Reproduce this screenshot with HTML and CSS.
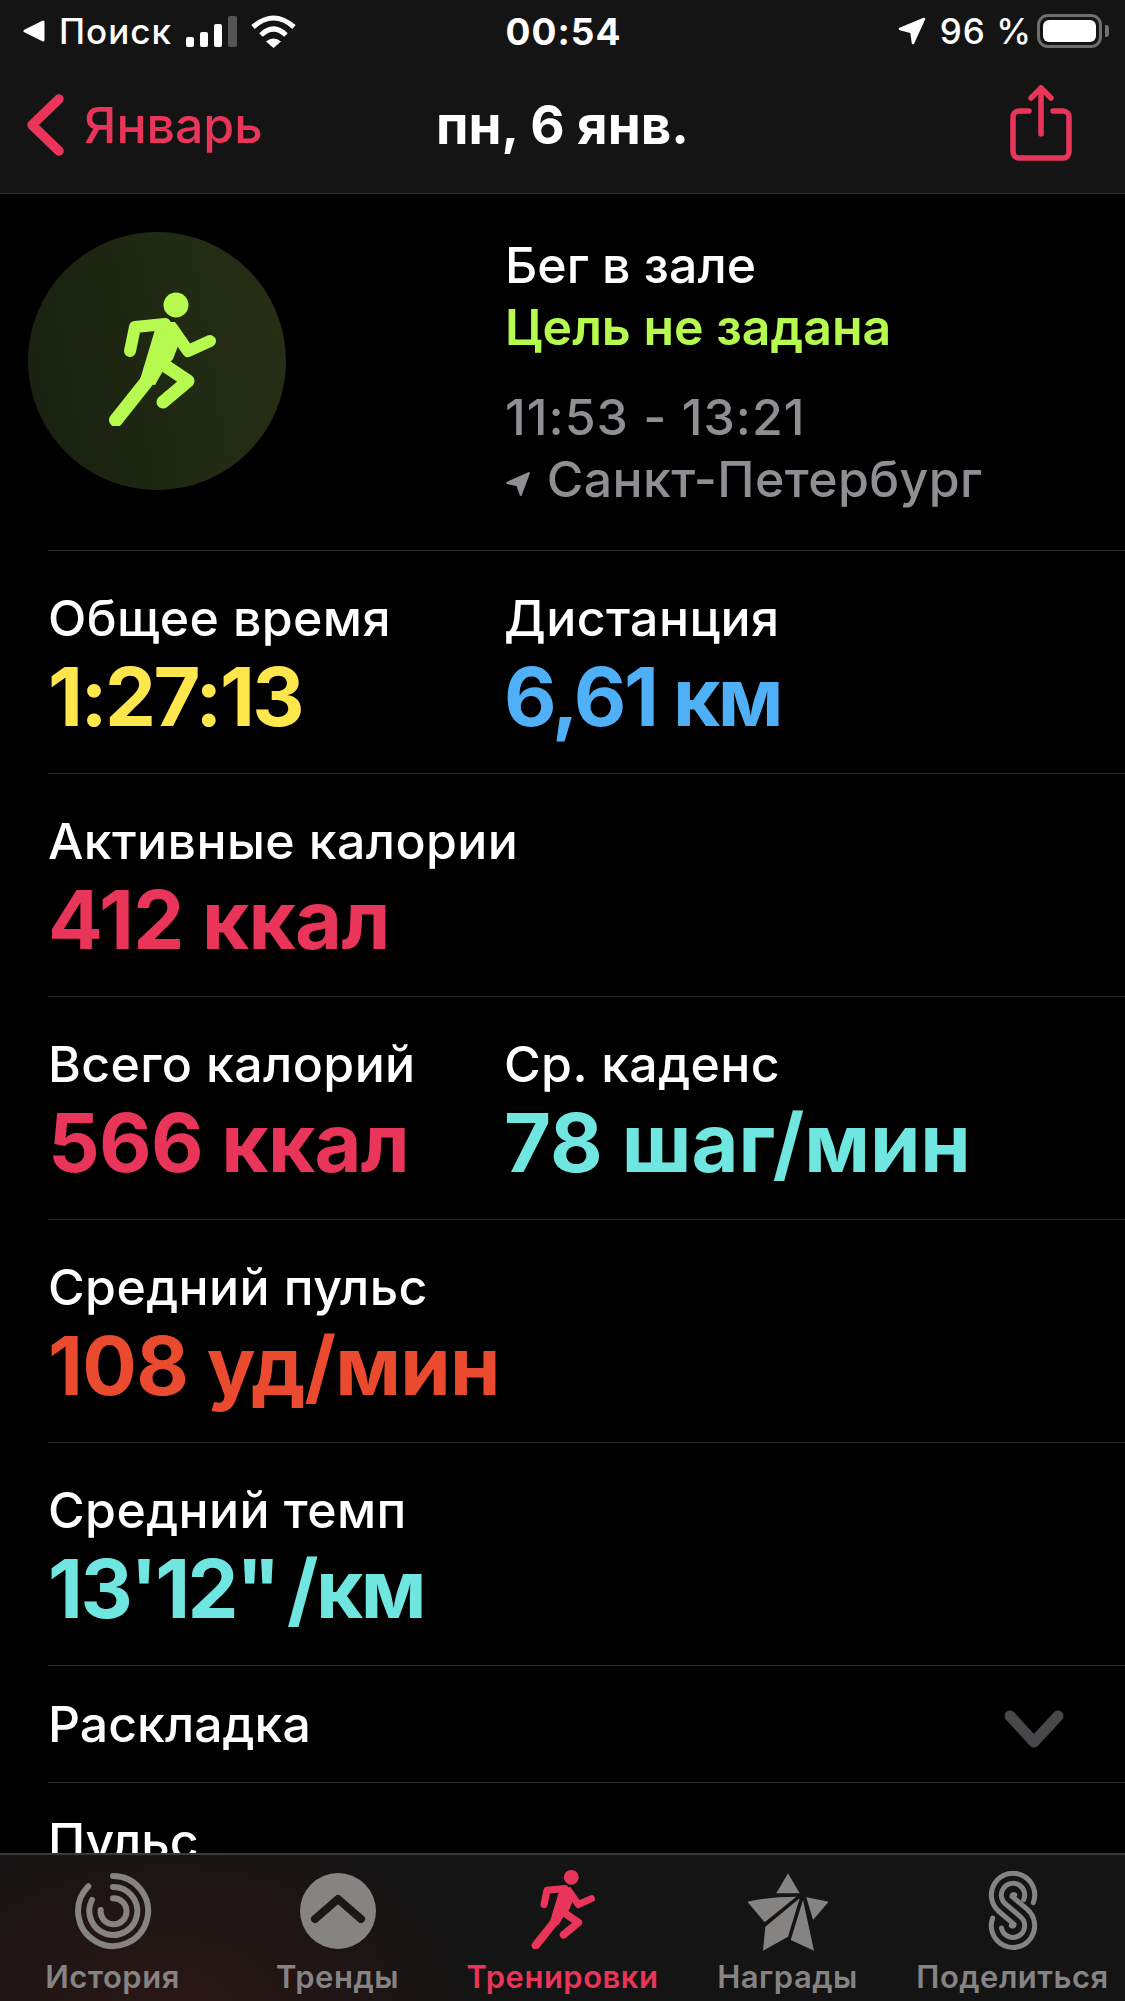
FILE: index.html
```html
<!DOCTYPE html>
<html lang="ru">
<head>
    <meta charset="UTF-8">
    <meta name="viewport" content="width=device-width, initial-scale=1.0">
    <title>Тренировка</title>
    <link rel="stylesheet" href="styles.css">
</head>
<body>
    <svg class="defs" width="0" height="0">
        <symbol id="runner" viewBox="0 0 110 135">
            <circle cx="69" cy="14" r="12.5" fill="currentColor"/>
            <path d="M50 32 L68 31 L73 50 L66 68 L56 80 L48 94 L32 92 Z" fill="currentColor"/>
            <g fill="none" stroke="currentColor" stroke-linecap="round" stroke-linejoin="round">
                <path d="M58 33 L28 36 L23 60" stroke-width="12"/>
                <path d="M65 37 L81 60 L103 50" stroke-width="12"/>
                <path d="M54 72 L81 90 L56 111" stroke-width="13"/>
                <path d="M40 90 L9 129" stroke-width="14"/>
            </g>
        </symbol>
    </svg>

    <div class="screen">
        <header class="top-bar">
            <div class="status-bar">
                <div class="status-left">
                    <svg class="back-tri" viewBox="0 0 22 22"><path d="M20 2 V20 L2 11 Z" fill="#fff" stroke="#fff" stroke-width="3" stroke-linejoin="round"/></svg>
                    <span>Поиск</span>
                    <svg class="signal" viewBox="0 0 51 31">
                        <rect x="0" y="21" width="8" height="10" rx="2" fill="#fff"/>
                        <rect x="14" y="16" width="8" height="15" rx="2" fill="#fff"/>
                        <rect x="28" y="8" width="8" height="23" rx="2" fill="#fff"/>
                        <rect x="42" y="0" width="9" height="31" rx="2" fill="#555"/>
                    </svg>
                    <svg class="wifi" viewBox="0 0 45 33">
                        <g fill="none" stroke="#fff" stroke-width="5">
                            <path d="M2 12 Q22.500 -6 43 12"/>
                            <path d="M10 20 Q22.500 8 35 20"/>
                        </g>
                        <path d="M15 26.500 Q22.500 20.500 30 26.500 L22.500 33 Z" fill="#fff"/>
                    </svg>
                </div>
                <div class="status-time">00:54</div>
                <div class="status-right">
                    <svg class="arrow" viewBox="0 0 28 28"><path d="M26 2 L15 26 L13.500 15 L2 12 Z" fill="#fff" stroke="#fff" stroke-width="2.500" stroke-linejoin="round"/></svg>
                    <span>96 %</span>
                    <div class="battery"><div class="battery-level"></div></div>
                    <div class="battery-tip"></div>
                </div>
            </div>
            <nav class="nav-bar">
                <a class="nav-back">
                    <svg class="chevron" viewBox="0 0 40 62"><path d="M33 5 L6 31 L33 57" fill="none" stroke="#e9355a" stroke-width="9.500" stroke-linecap="round" stroke-linejoin="round"/></svg>
                    <span>Январь</span>
                </a>
                <div class="nav-title">пн, 6 янв.</div>
                <div class="nav-action">
                    <svg class="share" viewBox="0 0 62 76">
                        <g fill="none" stroke="#e9355a" stroke-width="5.500" stroke-linecap="round" stroke-linejoin="round">
                            <path d="M19 26 H9 A6 6 0 0 0 3 32 V67 A6 6 0 0 0 9 73 H53 A6 6 0 0 0 59 67 V32 A6 6 0 0 0 53 26 H43"/>
                            <path d="M31 49 V3"/>
                            <path d="M21 13 L31 3 L41 13"/>
                        </g>
                    </svg>
                </div>
            </nav>
        </header>

        <section class="summary">
            <div class="badge">
                <svg class="badge-icon"><use href="#runner"/></svg>
            </div>
            <div class="summary-text">
                <div class="workout-name">Бег в зале</div>
                <div class="workout-goal">Цель не задана</div>
                <div class="workout-meta workout-time">11:53 - 13:21</div>
                <div class="workout-meta">
                    <svg class="meta-arrow" viewBox="0 0 24 24"><path d="M22 2 L14.500 22 L11.500 13 L2 11 Z" fill="#8e8e93" stroke="#8e8e93" stroke-width="2" stroke-linejoin="round"/></svg>
                    Санкт-Петербург
                </div>
            </div>
        </section>

        <section class="stats">
            <div class="stat-row">
                <div class="stat">
                    <div class="stat-label">Общее время</div>
                    <div class="stat-value yellow tight">1:27:13</div>
                </div>
                <div class="stat">
                    <div class="stat-label">Дистанция</div>
                    <div class="stat-value blue tight">6,61 км</div>
                </div>
            </div>
            <div class="stat-row">
                <div class="stat">
                    <div class="stat-label">Активные калории</div>
                    <div class="stat-value pink snug">412 ккал</div>
                </div>
            </div>
            <div class="stat-row">
                <div class="stat">
                    <div class="stat-label">Всего калорий</div>
                    <div class="stat-value pink snug">566 ккал</div>
                </div>
                <div class="stat">
                    <div class="stat-label">Ср. каденс</div>
                    <div class="stat-value teal">78 шаг/мин</div>
                </div>
            </div>
            <div class="stat-row">
                <div class="stat">
                    <div class="stat-label">Средний пульс</div>
                    <div class="stat-value red snug">108 уд/мин</div>
                </div>
            </div>
            <div class="stat-row">
                <div class="stat">
                    <div class="stat-label">Средний темп</div>
                    <div class="stat-value teal tight pace">13'12" /км</div>
                </div>
            </div>
            <div class="link-row">
                <span>Раскладка</span>
                <svg class="expand" viewBox="0 0 62 42"><path d="M7 7 L31 33 L55 7" fill="none" stroke="#48484a" stroke-width="11" stroke-linecap="round" stroke-linejoin="round"/></svg>
            </div>
            <div class="link-row"><span>Пульс</span></div>
        </section>

        <footer class="tab-bar">
            <div class="tab">
                <svg class="tab-icon" viewBox="11.700 11 80 80">
                    <g fill="none" stroke="#868383" stroke-width="6" stroke-linecap="round">
                        <path d="M51.700 16 A35 35 0 1 1 27 26.300"/>
                        <path d="M51.700 27 A24 24 0 1 1 30.700 40"/>
                        <path d="M51.700 38.300 A13 13 0 1 1 39.300 50"/>
                    </g>
                </svg>
                <span>История</span>
            </div>
            <div class="tab">
                <svg class="tab-icon" viewBox="0 0 80 80">
                    <circle cx="40" cy="40" r="38" fill="#868383"/>
                    <path d="M17 48 L40 28 L63 48" fill="none" stroke="#1c1615" stroke-width="8" stroke-linecap="round" stroke-linejoin="round"/>
                </svg>
                <span>Тренды</span>
            </div>
            <div class="tab tab-active">
                <svg class="tab-icon tab-runner"><use href="#runner"/></svg>
                <span>Тренировки</span>
            </div>
            <div class="tab">
                <svg class="tab-icon" viewBox="10 11 80 80">
                    <g fill="#868383">
                        <path d="M50 13.300 L61.700 33.300 L38.300 33.300 Z"/>
                        <path d="M9.300 41.700 Q33 36.700 58.300 36.700 L26.700 62.300 Z"/>
                        <path d="M68.300 37.300 L90.700 41.700 L75 60 Z"/>
                        <path d="M61.700 38.300 L50 76.700 L25 90.700 L27.300 66.700 Z"/>
                        <path d="M65 40 L76 90.700 L52.700 80 Z"/>
                    </g>
                </svg>
                <span>Награды</span>
            </div>
            <div class="tab">
                <svg class="tab-icon" viewBox="11 11 80 80">
                    <g fill="none" stroke="#868383" stroke-width="5" stroke-linecap="round">
                        <path d="M71.300 42.700 A21.700 21.700 0 1 0 37 51.500 L52.100 64.400 A1.700 1.700 0 0 1 49.300 65.700"/>
                        <path d="M61.700 39.700 A11.700 11.700 0 1 0 43.400 43.900 L58.600 56.800 A11.700 11.700 0 1 1 39.500 68"/>
                        <path d="M52.700 35 A1.700 1.700 0 0 0 49.900 36.300 L65 49.200 A21.700 21.700 0 1 1 30.700 58"/>
                    </g>
                </svg>
                <span>Поделиться</span>
            </div>
        </footer>
    </div>
</body>
</html>
```

FILE: styles.css
```css
* {
    box-sizing: border-box;
}

html, body {
    margin: 0;
    height: 100%;
    background-color: #000;
}

body {
    font-family: Inter, "Noto Sans", sans-serif;
    color: #fff;
}

.defs {
    position: absolute;
}

.screen {
    position: relative;
    width: 1125px;
    height: 2001px;
    overflow: hidden;
}

/* top bars */
.top-bar {
    height: 194px;
    background-color: #141414;
    border-bottom: 1px solid #2c2c2e;
}

.status-bar {
    display: grid;
    grid-template-columns: minmax(0, 1fr) auto minmax(0, 1fr);
    align-items: center;
    height: 62px;
    padding: 0 16px 0 23px;
    font-size: 35px;
    font-weight: 500;
    letter-spacing: 1px;
}

.status-left,
.status-right {
    display: flex;
    align-items: center;
}

.status-right {
    justify-content: flex-end;
}

.back-tri {
    width: 22px;
    height: 22px;
    margin-right: 14px;
}

.signal {
    width: 51px;
    height: 31px;
    margin-left: 14px;
}

.wifi {
    width: 45px;
    height: 33px;
    margin-left: 14px;
}

.status-time {
    margin-right: 5px;
    font-size: 37px;
    font-weight: 700;
}

.arrow {
    width: 28px;
    height: 28px;
    margin-right: 14px;
}

.battery {
    width: 65px;
    height: 34px;
    margin-left: 5px;
    padding: 3px;
    border: 3px solid #6f6f6f;
    border-radius: 11px;
}

.battery-level {
    width: 100%;
    height: 100%;
    background-color: #fff;
    border-radius: 6px;
}

.battery-tip {
    width: 4px;
    height: 12px;
    margin-left: 3px;
    background-color: #6f6f6f;
    border-radius: 0 3px 3px 0;
}

.nav-bar {
    display: grid;
    grid-template-columns: minmax(0, 1fr) auto minmax(0, 1fr);
    align-items: center;
    height: 132px;
    padding: 0 53px 6px 26px;
}

.nav-back {
    display: flex;
    align-items: center;
    gap: 18px;
    color: #e9355a;
    font-size: 50px;
    font-weight: 500;
}

.chevron {
    width: 40px;
    height: 62px;
}

.nav-title {
    margin-left: 27px;
    font-size: 53px;
    font-weight: 700;
}

.nav-action {
    display: flex;
    justify-content: flex-end;
    margin-bottom: 4px;
}

.share {
    width: 62px;
    height: 76px;
}

/* workout summary */
.summary {
    display: flex;
    height: 356px;
    padding: 38px 0 0 28px;
}

.badge {
    display: flex;
    align-items: center;
    justify-content: center;
    width: 258px;
    height: 258px;
    padding: 0 0 6px 10px;
    background: linear-gradient(80deg, #182010, #273015);
    border-radius: 50%;
}

.badge-icon {
    width: 110px;
    height: 135px;
    color: #b6f94f;
}

.summary-text {
    margin-left: 219px;
    padding-top: 2px;
    font-size: 50px;
    font-weight: 500;
    line-height: 62px;
}

.workout-goal {
    color: #b6f94f;
    font-weight: 600;
}

.workout-meta {
    color: #8e8e93;
    letter-spacing: 0.4px;
}

.workout-time {
    margin-top: 28px;
    letter-spacing: 1px;
}

.meta-arrow {
    width: 26px;
    height: 26px;
    margin-right: 2px;
}

/* stat rows */
.stat-row {
    display: flex;
    height: 223px;
    margin-left: 48px;
    padding-top: 32px;
    border-top: 1px solid #2c2c2e;
    white-space: nowrap;
}

.stat {
    width: 456px;
}

.stat-label {
    height: 72px;
    font-size: 50px;
    font-weight: 500;
    line-height: 70px;
    letter-spacing: 0.4px;
}

.stat-value {
    font-size: 81px;
    font-weight: 700;
    line-height: 84px;
}

.tight {
    letter-spacing: -2.500px;
}

.snug {
    letter-spacing: -0.700px;
}

.pace {
    word-spacing: -8px;
}

.yellow { color: #fde74c; }
.blue { color: #4fb0f7; }
.pink { color: #e9355a; }
.teal { color: #70e6e1; }
.red { color: #ea4a2e; }

.link-row {
    display: flex;
    align-items: center;
    justify-content: space-between;
    height: 117px;
    margin-left: 48px;
    padding-right: 60px;
    border-top: 1px solid #2c2c2e;
    font-size: 50px;
    font-weight: 500;
}

.expand {
    width: 62px;
    height: 42px;
    margin-top: 12px;
}

/* tab bar */
.tab-bar {
    position: absolute;
    left: 0;
    right: 0;
    bottom: 0;
    display: flex;
    height: 148px;
    padding-top: 16px;
    background: radial-gradient(ellipse 320px 200px at 170px 150px, #2a1715, #141414);
    border-top: 2px solid #3a3a3a;
}

.tab {
    display: flex;
    flex: 1;
    flex-direction: column;
    align-items: center;
    color: #868383;
    font-size: 31px;
    font-weight: 600;
    letter-spacing: 0.5px;
}

.tab-icon {
    width: 80px;
    height: 80px;
    margin-bottom: 7px;
}

.tab-active {
    color: #e9355a;
}

.tab-runner {
    margin-top: -2px;
    margin-bottom: 9px;
    color: #e9355a;
}
```
